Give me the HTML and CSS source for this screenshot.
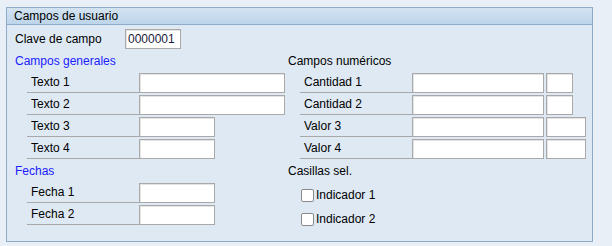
FILE: index.html
```html
<!doctype html>
<html>
<head>
	<meta charset="utf-8">
	<title>Campos de usuario</title>
	<link rel="stylesheet" href="styles.css">
</head>
<body>
	<div class="panel">
		<div class="panel-header">Campos de usuario</div>

		<div class="panel-body">
			<div class="key-row">
				<span class="key-label">Clave de campo</span>
				<input class="field w-key" type="text" value="0000001">
			</div>

			<div class="columns">
				<div class="column">
					<div class="section-title blue">Campos generales</div>
					<div class="row"><span class="label">Texto 1</span><input class="field w-long" type="text"></div>
					<div class="row"><span class="label">Texto 2</span><input class="field w-long" type="text"></div>
					<div class="row"><span class="label">Texto 3</span><input class="field w-short" type="text"></div>
					<div class="row"><span class="label">Texto 4</span><input class="field w-short" type="text"></div>

					<div class="section-title blue spaced">Fechas</div>
					<div class="row"><span class="label">Fecha 1</span><input class="field w-short" type="text"></div>
					<div class="row"><span class="label">Fecha 2</span><input class="field w-short" type="text"></div>
				</div>

				<div class="column">
					<div class="section-title">Campos numéricos</div>
					<div class="row"><span class="label">Cantidad 1</span><input class="field w-num" type="text"><input class="field w-unit" type="text"></div>
					<div class="row"><span class="label">Cantidad 2</span><input class="field w-num" type="text"><input class="field w-unit" type="text"></div>
					<div class="row"><span class="label">Valor 3</span><input class="field w-num" type="text"><input class="field w-curr" type="text"></div>
					<div class="row"><span class="label">Valor 4</span><input class="field w-num" type="text"><input class="field w-curr" type="text"></div>

					<div class="section-title spaced">Casillas sel.</div>
					<label class="check-row"><input class="check" type="checkbox">Indicador 1</label>
					<label class="check-row"><input class="check" type="checkbox">Indicador 2</label>
				</div>
			</div>
		</div>
	</div>
</body>
</html>
```

FILE: styles.css
```css
body {
	margin: 0;
	background-color: #e8eff7;
	font-family: "Liberation Sans", Arial, sans-serif;
	font-size: 12px;
	color: #000;
}

.panel {
	margin: 7px 0 0 6px;
	width: 585px;
	height: 233px;
	border: 1px solid #8eabca;
	background-color: #dee9f4;
}

.panel-header {
	height: 16px;
	line-height: 16px;
	padding-left: 7px;
	border-bottom: 1px solid #8eabca;
	background: linear-gradient(#d3e3f2, #bdd5ea);
}

.panel-body {
	padding: 4px 8px 0 8px;
}

.key-row {
	display: flex;
	align-items: center;
	height: 20px;
}

.key-label {
	width: 110px;
}

.columns {
	display: grid;
	grid-template-columns: 273px 1fr;
	margin-top: 4px;
}

.section-title {
	height: 16px;
	line-height: 16px;
	margin-bottom: 4px;
}

.section-title.spaced {
	margin-top: 4px;
}

.blue {
	color: #2020ff;
}

.row {
	display: flex;
	height: 20px;
	margin: 0 0 2px 12px;
}

.label {
	width: 108px;
	padding-left: 4px;
	line-height: 19px;
	border-bottom: 1px solid #a8a8a8;
}

.field {
	box-sizing: border-box;
	height: 20px;
	margin: 0;
	padding: 0 2px;
	border: 1px solid #a9a9a9;
	border-radius: 0;
	background-color: #fff;
	box-shadow: inset 1px 1px 0 #e4e4e4;
	font-family: "Liberation Sans", Arial, sans-serif;
	font-size: 12px;
	color: #1a1a3a;
	outline: none;
}

.field + .field {
	margin-left: 2px;
}

.w-key {
	width: 56px;
}

.w-long {
	width: 146px;
}

.w-short {
	width: 76px;
}

.w-num {
	width: 132px;
}

.w-unit {
	width: 27px;
}

.w-curr {
	width: 40px;
}

.check-row {
	display: flex;
	align-items: center;
	height: 20px;
	margin: 0 0 2px 13px;
	padding-top: 2px;
}

.check {
	appearance: none;
	box-sizing: border-box;
	width: 13px;
	height: 13px;
	margin: 0 2px 0 0;
	border: 1px solid #8a8a8a;
	border-radius: 2px;
	background-color: #fff;
}
```
